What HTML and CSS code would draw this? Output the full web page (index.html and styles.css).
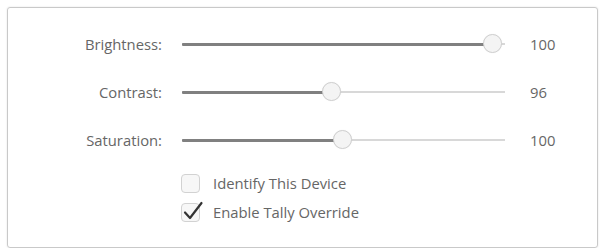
FILE: index.html
```html
<!DOCTYPE html>
<html>
<head>
<meta charset="utf-8">
<link rel="stylesheet" href="styles.css">
</head>
<body>
<div class="panel">
  <div class="sliders">
    <div class="label">Brightness:</div>
    <div class="track">
      <div class="fill" style="width: 96.3%"></div>
      <div class="thumb" style="left: 96.3%"></div>
    </div>
    <div class="value">100</div>

    <div class="label">Contrast:</div>
    <div class="track">
      <div class="fill" style="width: 46.4%"></div>
      <div class="thumb" style="left: 46.4%"></div>
    </div>
    <div class="value">96</div>

    <div class="label">Saturation:</div>
    <div class="track">
      <div class="fill" style="width: 49.8%"></div>
      <div class="thumb" style="left: 49.8%"></div>
    </div>
    <div class="value">100</div>
  </div>
  <div class="checks">
    <div class="check">
      <span class="box"></span>
      <span class="check-label">Identify This Device</span>
    </div>
    <div class="check">
      <span class="box">
        <svg class="tick" width="22" height="22" viewBox="0 0 22 22">
          <path d="M3 11.5 L8 17 L19.5 2" fill="none" stroke="#333333" stroke-width="2.2" stroke-linecap="round" stroke-linejoin="round"/>
        </svg>
      </span>
      <span class="check-label">Enable Tally Override</span>
    </div>
  </div>
</div>
</body>
</html>
```
FILE: styles.css
```css
html, body {
  margin: 0;
  padding: 0;
  background: #ffffff;
}
body {
  font-family: "Open Sans", "Liberation Sans", sans-serif;
  color: #666666;
  font-size: 14.8px;
}
.panel {
  box-sizing: border-box;
  margin: 7px 0 0 7px;
  width: 591px;
  height: 241px;
  border: 1px solid #c9c9c9;
  border-radius: 3px;
  box-shadow: 0 0 2px rgba(0,0,0,0.12);
  padding-top: 24px;
}
.sliders {
  display: grid;
  grid-template-columns: 154px 323px 60px;
  column-gap: 20px;
  row-gap: 24px;
  align-items: center;
}
.sliders .value {
  margin-left: 5px;
}
.label {
  text-align: right;
  height: 24px;
  line-height: 24px;
}
.value {
  height: 24px;
  line-height: 24px;
}
.track {
  position: relative;
  height: 2px;
  background: #d8d8d8;
}
.fill {
  position: absolute;
  left: 0;
  top: -0.5px;
  height: 3px;
  background: #808080;
  border-radius: 1px;
}
.thumb {
  position: absolute;
  top: 1px;
  width: 19px;
  height: 19px;
  margin-left: -10px;
  margin-top: -10px;
  box-sizing: border-box;
  border: 1px solid #d0d0d0;
  border-radius: 50%;
  background: #f4f4f4;
  box-shadow: 0 0 1px rgba(0,0,0,0.1);
}
.checks {
  margin-top: 19px;
  margin-left: 173px;
  display: flex;
  flex-direction: column;
  gap: 5px;
}
.check {
  display: flex;
  align-items: center;
  height: 24px;
}
.box {
  position: relative;
  box-sizing: border-box;
  width: 19px;
  height: 19px;
  border: 1px solid #d2d2d2;
  border-radius: 4px;
  background: #f7f7f7;
  margin-right: 13px;
}
.tick {
  position: absolute;
  left: 0px;
  top: -3px;
}
.check-label {
  color: #666666;
}
```
